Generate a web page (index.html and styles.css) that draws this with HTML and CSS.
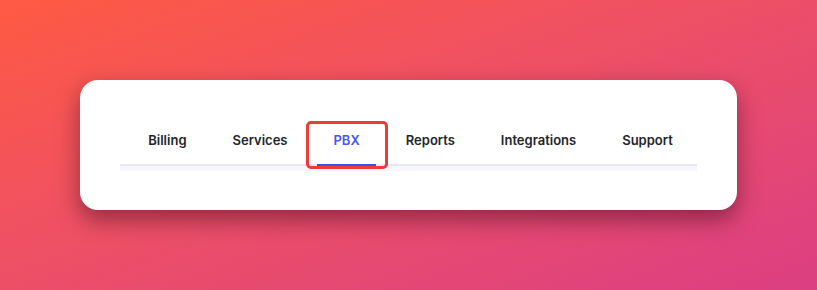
FILE: index.html
```html
<!DOCTYPE html>
<html lang="en">
<head>
    <meta charset="UTF-8">
    <meta name="viewport" content="width=device-width, initial-scale=1.0">
    <title>Tabs</title>
    <link rel="stylesheet" href="styles.css">
</head>
<body>
    <div class="card">
        <nav class="tabs">
            <a class="tab">Billing</a>
            <a class="tab">Services</a>
            <a class="tab active">PBX<span class="highlight"></span></a>
            <a class="tab">Reports</a>
            <a class="tab">Integrations</a>
            <a class="tab">Support</a>
        </nav>
        <div class="panel"></div>
    </div>
</body>
</html>
```

FILE: styles.css
```css
html, body {
    height: 100%;
}

body {
    margin: 0;
    padding: 80px 0 0 80px;
    box-sizing: border-box;
    font-family: Inter, "Noto Sans", sans-serif;
    background: linear-gradient(160deg, #ff5a43 0%, #ee5065 45%, #dc3f82 100%);
    overflow: hidden;
}

.card {
    width: 657px;
    height: 130px;
    box-sizing: border-box;
    padding: 38px 40px 0 40px;
    background-color: #fff;
    border-radius: 18px;
    box-shadow: 0 10px 22px rgba(60, 10, 30, 0.5);
}

.tabs {
    display: flex;
    justify-content: center;
    gap: 14px;
    padding-left: 4px;
    border-bottom: 2px solid #e6e8f6;
}

.tab {
    position: relative;
    padding: 13px 16px 15px;
    margin-bottom: -2px;
    border-bottom: 2px solid transparent;
    font-size: 13px;
    line-height: 18px;
    font-weight: 600;
    color: #23252b;
    cursor: pointer;
}

.tab.active {
    color: #4a57f0;
    border-bottom-color: #3c50e8;
}

.highlight {
    position: absolute;
    top: 3px;
    left: -11px;
    right: -12px;
    bottom: -5px;
    border: 3.5px solid #ec3b3b;
    border-radius: 5px;
}

.panel {
    height: 5px;
    background-color: #f6f6fc;
}
```
